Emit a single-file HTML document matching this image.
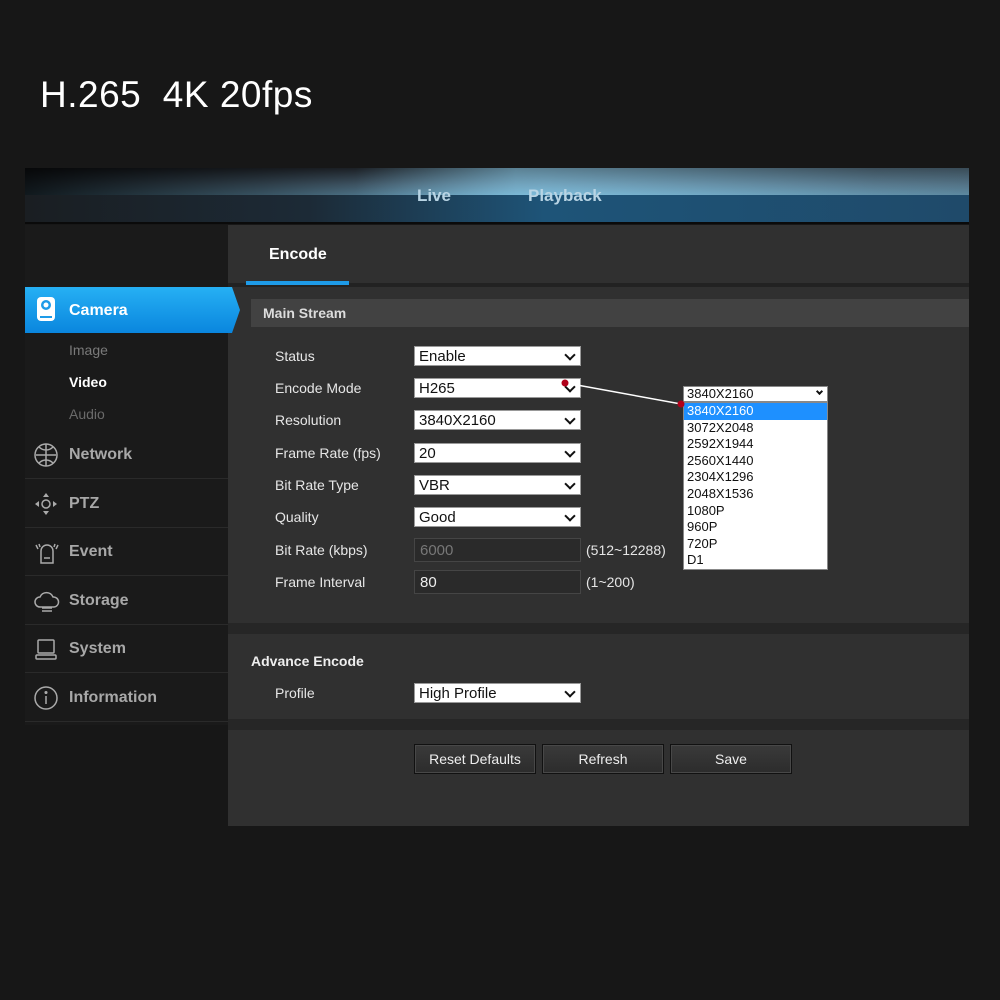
<!DOCTYPE html>
<html><head><style>
*{margin:0;padding:0;box-sizing:border-box}
body{width:1000px;height:1000px;background:#171717;font-family:"Liberation Sans",Arial,sans-serif;position:relative;overflow:hidden}
.a{position:absolute}
.title{left:40px;top:74px;font-size:37px;color:#fff;letter-spacing:0.5px;white-space:pre}
.hdr{left:25px;top:168px;width:944px;height:56px;border-bottom:2px solid #0a0a0a;overflow:hidden}
.hdr .t{position:absolute;left:0;top:0;width:100%;height:27px;background:linear-gradient(90deg,rgba(0,0,0,0.85) 0%,rgba(0,0,0,0.5) 25%,rgba(0,0,0,0) 55%,rgba(0,0,0,0.3) 100%),linear-gradient(180deg,#2a3038 0%,#5a7a90 60%,#6fa6c4 100%)}
.hdr .t2{position:absolute;left:0;top:0;width:100%;height:27px;background:linear-gradient(90deg,rgba(0,0,0,0) 35%,rgba(140,210,240,0.5) 52%,rgba(140,200,230,0.25) 90%)}
.hdr .b{position:absolute;left:0;top:27px;width:100%;height:29px;background:linear-gradient(90deg,#1a1e22 0%,#1c2a36 30%,#1e5478 55%,#1f4a6a 100%)}
.hdr span{position:absolute;top:18px;font-size:17px;font-weight:bold;color:#b8d4e4}
.side{left:25px;top:225px;width:203px;height:500px;background:#1a1a1a}
.main{left:228px;top:225px;width:741px;height:601px;background:#303030}
.lbl{font-size:14px;color:#e6e6e6}
.sel{position:absolute;left:414px;width:167px;height:20px;background:#fff;border:1px solid #999;font-size:15px;color:#111;padding-left:4px;line-height:19px}
.sel:after{content:"";position:absolute;right:6px;top:4px;width:6px;height:6px;border-right:2px solid #111;border-bottom:2px solid #111;transform:rotate(45deg)}
.inp{position:absolute;left:414px;width:167px;height:24px;background:#2a2a2a;border:1px solid #454545;font-size:15px;padding-left:5px;line-height:24px}
.nav{position:absolute;left:25px;width:203px;height:48px;border-bottom:1px solid #2a2a2a}
.nav span{position:absolute;left:44px;top:15px;font-size:16px;font-weight:bold;color:#a8a8a8}
.nav svg{position:absolute;left:8px;top:11px}
.btn{position:absolute;top:744px;height:30px;width:122px;background:linear-gradient(#3a3a3a,#2c2c2c);border:1px solid #111;box-shadow:inset 0 0 0 1px #484848;color:#eee;font-size:14px;text-align:center;line-height:28px}
.dd{left:683px;top:402px;width:145px;height:168px;background:#fff;border:1px solid #888;font-size:13px;color:#111}
.dd div{height:16.6px;line-height:16.6px;padding-left:3px}
</style></head><body>
<div class="a title">H.265  4K 20fps</div>
<div class="a hdr"><div class="t"></div><div class="t2"></div><div class="b"></div><span style="left:392px">Live</span><span style="left:503px">Playback</span></div>
<div class="a side"></div>
<div class="a main"></div>
<div class="a" style="left:228px;top:283px;width:741px;height:4px;background:#222"></div>
<div class="a" style="left:269px;top:246px;font-size:16px;font-weight:bold;color:#fff">Encode</div>
<div class="a" style="left:246px;top:281px;width:103px;height:4px;background:#1e9be8"></div>
<div class="a" style="left:251px;top:299px;width:718px;height:28px;background:#424242"></div>
<div class="a" style="left:263px;top:305px;font-size:14px;font-weight:bold;color:#ddd">Main Stream</div>
<svg class="a" style="left:25px;top:287px" width="216" height="46"><defs><linearGradient id="g" x1="0" y1="0" x2="0" y2="1"><stop offset="0" stop-color="#26b0f4"/><stop offset="1" stop-color="#0a86de"/></linearGradient></defs><polygon points="0,0 207,0 215,23 207,46 0,46" fill="url(#g)"/>
<rect x="12" y="10" width="18" height="24" rx="4" fill="#fff"/><circle cx="21" cy="18" r="5" fill="#1e9be8"/><circle cx="21" cy="18" r="2.5" fill="#fff"/><rect x="15" y="29" width="12" height="2" fill="#1e9be8"/></svg>
<div class="a" style="left:69px;top:302px;font-size:16px;font-weight:bold;color:#fff">Camera</div>
<div class="a" style="left:69px;top:342px;font-size:14px;color:#7a7a7a">Image</div>
<div class="a" style="left:69px;top:374px;font-size:14px;font-weight:bold;color:#fff">Video</div>
<div class="a" style="left:69px;top:406px;font-size:14px;color:#6a6a6a">Audio</div>
<div class="nav" style="top:431px"><svg width="28" height="28" fill="none" stroke="#aaa" stroke-width="1.5"><circle cx="13" cy="13" r="11"/><path d="M3 13h20M13 2v22M6 5c4 4 10 4 14 0M6 21c4-4 10-4 14 0"/></svg><span>Network</span></div>
<div class="nav" style="top:480px"><svg width="28" height="28" fill="#aaa" stroke="#aaa" stroke-width="1.5"><circle cx="13" cy="13" r="4" fill="none"/><path d="M13 2l-3 4h6zM13 24l-3-4h6zM2 13l4-3v6zM24 13l-4-3v6z" stroke="none"/></svg><span>PTZ</span></div>
<div class="nav" style="top:528px"><svg width="30" height="28" fill="none" stroke="#aaa" stroke-width="1.5"><path d="M8 24V12a6 6 0 0 1 12 0v12zM11 19h6M3 6l2 4M6 5l1 3M25 6l-2 4M22 5l-1 3"/></svg><span>Event</span></div>
<div class="nav" style="top:577px"><svg width="30" height="28" fill="none" stroke="#aaa" stroke-width="1.5"><path d="M7 19a5 5 0 0 1 0-10 7 7 0 0 1 13 0 5 5 0 0 1 1 10zM9 20h10M9 23h10"/></svg><span>Storage</span></div>
<div class="nav" style="top:625px"><svg width="28" height="28" fill="none" stroke="#aaa" stroke-width="1.5"><rect x="5" y="4" width="16" height="13" rx="1"/><rect x="3" y="19" width="20" height="4" rx="1"/></svg><span>System</span></div>
<div class="nav" style="top:674px"><svg width="28" height="28" fill="none" stroke="#aaa" stroke-width="1.5"><circle cx="13" cy="13" r="11"/><path d="M13 11v8"/><circle cx="13" cy="7.5" r="0.8" fill="#aaa"/></svg><span>Information</span></div>

<div class="a lbl" style="left:275px;top:348px">Status</div>
<div class="a lbl" style="left:275px;top:380px">Encode Mode</div>
<div class="a lbl" style="left:275px;top:412px">Resolution</div>
<div class="a lbl" style="left:275px;top:445px">Frame Rate (fps)</div>
<div class="a lbl" style="left:275px;top:477px">Bit Rate Type</div>
<div class="a lbl" style="left:275px;top:509px">Quality</div>
<div class="a lbl" style="left:275px;top:542px">Bit Rate (kbps)</div>
<div class="a lbl" style="left:275px;top:574px">Frame Interval</div>
<div class="sel" style="top:346px">Enable</div>
<div class="sel" style="top:378px">H265</div>
<div class="sel" style="top:410px">3840X2160</div>
<div class="sel" style="top:443px">20</div>
<div class="sel" style="top:475px">VBR</div>
<div class="sel" style="top:507px">Good</div>
<div class="inp" style="top:538px;color:#777">6000</div>
<div class="inp" style="top:570px;color:#eee">80</div>
<div class="a lbl" style="left:586px;top:542px">(512~12288)</div>
<div class="a lbl" style="left:586px;top:574px">(1~200)</div>

<div class="a" style="left:228px;top:623px;width:741px;height:11px;background:#262626"></div>
<div class="a" style="left:251px;top:653px;font-size:14px;font-weight:bold;color:#eee">Advance Encode</div>
<div class="a lbl" style="left:275px;top:685px">Profile</div>
<div class="sel" style="top:683px">High Profile</div>
<div class="a" style="left:228px;top:719px;width:741px;height:11px;background:#262626"></div>
<div class="btn" style="left:414px">Reset Defaults</div>
<div class="btn" style="left:542px">Refresh</div>
<div class="btn" style="left:670px">Save</div>

<div class="a" style="left:683px;top:386px;width:145px;height:16px;background:#fff;border:1px solid #888;font-size:13px;line-height:14px;padding-left:3px;color:#111">3840X2160<span style="position:absolute;right:5px;top:2px;width:5px;height:5px;border-right:2px solid #111;border-bottom:2px solid #111;transform:rotate(45deg)"></span></div>
<div class="a dd"><div style="background:#1e90ff;color:#fff">3840X2160</div><div>3072X2048</div><div>2592X1944</div><div>2560X1440</div><div>2304X1296</div><div>2048X1536</div><div>1080P</div><div>960P</div><div>720P</div><div>D1</div></div>
<svg class="a" style="left:0;top:0" width="1000" height="1000"><line x1="566" y1="383" x2="681" y2="404" stroke="#fff" stroke-width="1.5"/><circle cx="565" cy="383" r="3.5" fill="#b0001a"/><circle cx="681" cy="404" r="3.5" fill="#b0001a"/></svg>
</body></html>
